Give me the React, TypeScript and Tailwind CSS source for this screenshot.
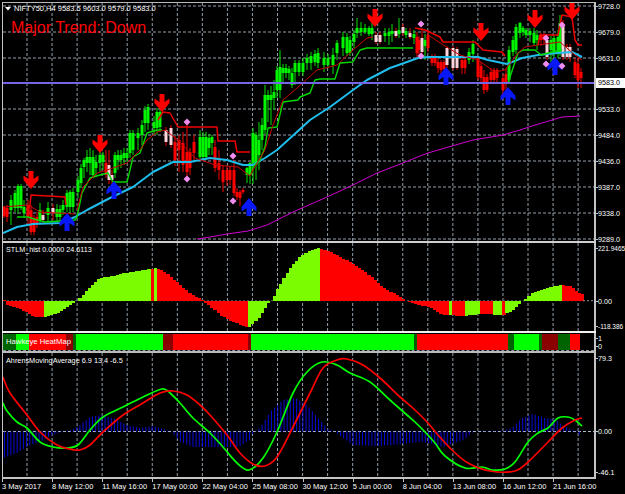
import React from "react";

type P = [number, number];
const GX = Array.from({ length: 23 }, (_, i) => 27 + i * 25.05);
const GY = [6, 32, 58, 109, 135, 161, 187, 213, 239];

const pts = (a: P[]) => a.map((p) => p.join(",")).join(" ");
const interp = (a: P[], x: number) => {
  for (let i = 1; i < a.length; i++) {
    if (x <= a[i][0]) {
      const [x0, y0] = a[i - 1];
      const [x1, y1] = a[i];
      return y0 + ((y1 - y0) * (x - x0)) / (x1 - x0 || 1);
    }
  }
  return a[a.length - 1][1];
};
const smooth = (a: P[]) => {
  let d = `M${a[0][0]},${a[0][1]}`;
  for (let i = 0; i < a.length - 1; i++) {
    const p0 = a[Math.max(i - 1, 0)];
    const p1 = a[i];
    const p2 = a[i + 1];
    const p3 = a[Math.min(i + 2, a.length - 1)];
    const c1x = p1[0] + (p2[0] - p0[0]) / 6;
    const c1y = p1[1] + (p2[1] - p0[1]) / 6;
    const c2x = p2[0] - (p3[0] - p1[0]) / 6;
    const c2y = p2[1] - (p3[1] - p1[1]) / 6;
    d += ` C${c1x},${c1y} ${c2x},${c2y} ${p2[0]},${p2[1]}`;
  }
  return d;
};

// x, wickTop, top, bottom, wickBottom, kind
type C = [number, number, number, number, number, "g" | "r" | "p"];
const candles: C[] = [
  [4, 206, 207, 216, 218, "r"], [7, 205, 208, 217, 222, "r"], [11, 195, 200, 210, 225, "g"], [15, 190, 193, 208, 212, "g"],
  [18, 184, 186, 208, 214, "g"], [21, 184, 186, 208, 210, "g"], [24, 200, 207, 213, 218, "g"], [28, 200, 205, 217, 224, "r"],
  [31, 205, 210, 232, 235, "r"], [34, 215, 218, 232, 235, "r"], [37, 212, 217, 223, 228, "r"], [40, 203, 210, 220, 224, "g"],
  [43, 210, 215, 220, 224, "p"], [48, 202, 208, 215, 222, "g"], [53, 204, 208, 213, 220, "p"], [57, 204, 209, 217, 222, "g"],
  [60, 205, 209, 217, 221, "g"], [63, 200, 205, 210, 215, "g"], [67, 190, 193, 207, 212, "g"], [70, 190, 192, 207, 214, "g"],
  [73, 188, 192, 207, 212, "g"], [78, 176, 180, 192, 198, "g"], [81, 164, 168, 183, 188, "g"], [84, 158, 160, 167, 178, "g"],
  [87, 150, 157, 163, 172, "g"], [90, 148, 157, 163, 175, "g"], [93, 150, 157, 175, 178, "g"], [96, 155, 162, 168, 176, "g"],
  [100, 150, 155, 163, 172, "g"], [103, 152, 155, 162, 170, "g"], [106, 150, 163, 175, 178, "r"], [109, 150, 165, 180, 184, "p"],
  [112, 170, 175, 180, 185, "p"], [115, 152, 155, 173, 178, "g"], [118, 150, 155, 160, 170, "g"], [121, 150, 155, 160, 168, "g"],
  [124, 148, 153, 158, 165, "g"], [127, 148, 153, 158, 162, "g"], [130, 130, 133, 153, 158, "g"], [133, 130, 133, 150, 155, "g"],
  [138, 128, 133, 138, 150, "g"], [142, 120, 125, 135, 145, "g"], [145, 106, 110, 123, 132, "g"], [148, 104, 107, 123, 130, "g"],
  [154, 116, 122, 128, 135, "g"], [157, 108, 112, 128, 135, "g"], [160, 108, 112, 127, 132, "g"], [166, 127, 130, 142, 146, "p"],
  [171, 125, 128, 145, 148, "p"], [175, 136, 142, 160, 166, "r"], [179, 135, 140, 150, 172, "r"], [183, 132, 143, 165, 172, "r"],
  [187, 124, 152, 172, 177, "r"], [190, 148, 152, 168, 175, "r"], [194, 135, 142, 153, 160, "r"], [200, 130, 137, 157, 160, "g"],
  [203, 132, 137, 157, 160, "g"], [206, 132, 137, 157, 160, "g"], [209, 134, 138, 148, 155, "g"], [212, 135, 137, 143, 155, "g"],
  [215, 140, 147, 168, 172, "r"], [219, 150, 163, 170, 180, "r"], [223, 165, 170, 182, 192, "r"], [227, 166, 170, 180, 186, "r"],
  [230, 166, 170, 180, 185, "r"], [234, 160, 170, 193, 196, "r"], [237, 188, 192, 197, 200, "r"], [240, 190, 192, 198, 206, "r"],
  [243, 188, 190, 192, 194, "r"], [247, 167, 168, 175, 183, "g"], [250, 162, 163, 175, 184, "g"], [253, 128, 133, 163, 184, "g"],
  [256, 132, 135, 165, 180, "g"], [259, 122, 140, 155, 170, "g"], [262, 118, 125, 140, 150, "g"], [265, 85, 95, 130, 134, "g"],
  [268, 90, 95, 100, 122, "g"], [271, 86, 95, 100, 125, "g"], [274, 80, 92, 98, 110, "g"], [277, 66, 70, 90, 98, "g"],
  [280, 50, 67, 90, 98, "g"], [283, 64, 68, 73, 82, "g"], [286, 64, 68, 73, 78, "g"], [289, 66, 69, 73, 80, "g"],
  [292, 68, 73, 85, 88, "g"], [295, 60, 63, 72, 85, "g"], [299, 60, 63, 72, 76, "g"], [303, 58, 63, 72, 76, "g"],
  [307, 54, 58, 63, 70, "g"], [311, 52, 56, 63, 70, "g"], [315, 50, 54, 62, 66, "g"], [318, 48, 53, 63, 68, "g"],
  [324, 52, 58, 65, 72, "g"], [328, 54, 58, 65, 68, "g"], [333, 48, 55, 65, 74, "g"], [337, 40, 43, 53, 60, "g"],
  [343, 32, 37, 48, 56, "g"], [347, 33, 37, 53, 56, "g"], [350, 36, 40, 53, 56, "g"], [354, 30, 34, 42, 48, "g"],
  [357, 18, 28, 33, 38, "g"], [361, 22, 28, 32, 36, "g"], [365, 24, 28, 32, 34, "g"], [369, 26, 28, 34, 36, "g"],
  [372, 20, 28, 34, 40, "g"], [376, 32, 35, 42, 44, "p"], [380, 32, 35, 42, 44, "p"], [385, 28, 33, 36, 42, "g"],
  [389, 28, 32, 36, 45, "g"], [392, 24, 31, 34, 42, "g"], [396, 28, 31, 36, 38, "p"], [399, 18, 30, 34, 38, "g"],
  [403, 24, 27, 33, 36, "p"], [406, 28, 31, 35, 38, "g"], [410, 28, 33, 37, 39, "p"], [414, 30, 34, 38, 44, "g"],
  [417, 32, 37, 53, 58, "r"], [419, 36, 40, 50, 56, "r"], [422, 28, 38, 52, 56, "p"], [425, 34, 40, 46, 60, "g"],
  [428, 30, 35, 48, 52, "r"], [432, 54, 57, 63, 66, "r"], [435, 54, 57, 63, 66, "r"], [438, 58, 62, 68, 73, "r"],
  [441, 60, 62, 70, 74, "r"], [444, 60, 62, 69, 72, "r"], [447, 46, 48, 65, 68, "p"], [453, 46, 48, 68, 70, "p"],
  [457, 47, 49, 68, 70, "p"], [462, 56, 60, 68, 74, "r"], [465, 56, 60, 68, 74, "r"], [469, 48, 52, 60, 64, "g"],
  [473, 40, 44, 54, 62, "g"], [478, 56, 58, 77, 80, "r"], [481, 62, 66, 78, 82, "r"], [484, 70, 77, 90, 94, "r"],
  [487, 74, 77, 90, 92, "r"], [491, 68, 72, 80, 84, "r"], [494, 68, 70, 80, 82, "r"], [497, 68, 70, 78, 82, "r"],
  [503, 74, 78, 90, 96, "r"], [506, 68, 74, 84, 92, "r"], [509, 46, 50, 80, 84, "g"], [513, 36, 40, 52, 56, "g"],
  [516, 24, 27, 50, 54, "g"], [520, 22, 23, 33, 38, "g"], [523, 26, 28, 32, 36, "g"], [526, 28, 30, 35, 38, "g"],
  [530, 28, 31, 35, 42, "g"], [534, 28, 33, 43, 46, "g"], [537, 30, 35, 40, 50, "g"], [541, 33, 35, 40, 46, "r"],
  [544, 33, 35, 40, 44, "r"], [547, 38, 40, 57, 60, "p"], [551, 36, 40, 50, 62, "g"], [554, 36, 38, 53, 60, "g"],
  [558, 30, 37, 53, 58, "g"], [560, 15, 23, 52, 56, "g"], [563, 20, 25, 57, 60, "p"], [567, 44, 47, 57, 60, "p"],
  [570, 44, 47, 57, 62, "p"], [575, 58, 62, 75, 78, "r"], [578, 58, 64, 80, 88, "r"], [581, 68, 72, 78, 88, "r"],
];

const cyan: P[] = [[3, 233], [17, 227], [33, 224], [60, 223], [75, 217], [87, 210], [110, 198], [133, 187], [153, 172], [173, 162], [190, 162], [210, 158], [227, 160], [243, 165], [253, 165], [265, 158], [277, 150], [298, 131], [310, 120], [330, 107], [353, 90], [367, 80], [390, 68], [407, 62], [418, 58], [428, 57], [478, 57], [488, 60], [507, 64], [522, 58], [538, 55], [558, 53], [572, 52], [582, 57]];
const magenta: P[] = [[197, 239], [210, 237], [227, 234], [248, 231], [267, 225], [293, 212], [327, 197], [353, 185], [377, 173], [403, 163], [420, 156], [428, 153], [445, 148], [452, 146], [473, 140], [503, 135], [520, 130], [532, 126], [562, 117], [580, 116]];
const greenA: P[] = [[17, 217], [28, 217], [34, 219], [45, 222], [75, 220], [77, 217], [82, 193], [90, 178], [100, 175], [108, 173], [113, 182], [127, 182], [130, 170], [133, 157], [140, 153], [147, 133], [157, 130], [162, 130]];
const greenB: P[] = [[252, 168], [260, 160], [265, 147], [268, 128], [277, 127], [283, 102], [298, 100], [300, 97], [310, 93], [315, 80], [320, 79], [335, 79], [340, 63], [353, 62], [360, 50], [367, 48], [413, 48]];
const greenC: P[] = [[508, 83], [518, 53], [523, 50], [535, 50], [541, 55], [552, 52], [562, 50]];
const redBold: P[][] = [
  [[28, 210], [30, 205], [31, 195], [48, 196], [65, 197], [66, 205]],
  [[158, 120], [163, 112], [170, 113], [178, 127], [217, 127], [218, 141], [235, 141], [237, 152], [250, 152]],
  [[415, 28], [425, 30], [440, 37], [443, 42], [475, 42], [483, 50], [502, 52], [505, 56]],
  [[538, 45], [540, 35], [558, 35], [562, 15], [572, 17], [575, 40], [578, 45], [582, 45]],
];
const redThin: P[][] = [
  [[3, 207], [28, 205], [40, 212], [75, 214]],
  [[77, 210], [83, 187], [97, 173], [107, 170], [127, 163], [140, 150], [147, 140], [157, 132], [165, 130], [178, 140], [195, 158], [215, 165], [238, 167], [250, 176], [253, 170], [265, 150], [273, 125], [283, 100], [297, 88], [317, 70], [337, 65], [353, 50], [367, 38], [373, 37]],
  [[428, 35], [445, 46], [460, 55], [478, 60], [495, 72], [505, 70], [518, 53], [525, 47], [538, 45], [560, 42], [575, 55], [582, 60]],
];
const down = (c: number, y: number) => `translate(${c} ${y})`;
const arrowPts = "-2.5,0 2.5,0 2.5,8 7.5,4.5 7.5,9 0,18 -7.5,9 -7.5,4.5 -2.5,8";
const reds: P[] = [[31, 171], [100, 135], [162, 94], [375, 9], [481, 23], [535, 10], [572, 2]];
const blues: P[] = [[67, 213], [114, 181], [249, 198], [446, 67], [508, 87], [555, 57]];
const diamonds: P[] = [[187, 122], [187, 179], [233, 156], [233, 201], [421, 24], [421, 56], [546, 38], [546, 64], [562, 25], [562, 66]];

const stlm: P[] = [[3, 297], [5, 301], [7, 305], [17, 308], [27, 312], [35, 317], [45, 317], [53, 315], [63, 310], [77, 301], [80, 298], [90, 287], [100, 278], [113, 276], [130, 272], [150, 269], [157, 268], [167, 273], [180, 285], [193, 295], [202, 300], [210, 306], [220, 315], [233, 322], [247, 327], [250, 327], [260, 317], [268, 303], [273, 300], [277, 290], [283, 280], [290, 268], [300, 257], [310, 250], [320, 248], [333, 253], [350, 262], [367, 273], [383, 287], [407, 301], [415, 304], [432, 308], [442, 315], [448, 315], [465, 316], [480, 314], [504, 315], [513, 310], [523, 301], [532, 293], [540, 291], [550, 287], [561, 285], [570, 286], [578, 292], [582, 294]];
const stlmGreen: P[] = [[44, 151], [154, 157], [248, 320], [448, 451], [464, 480], [492, 502], [504, 561]];
const ahrensHist: P[] = [[3, 458], [17, 453], [30, 445], [40, 442], [50, 436], [63, 431.5], [72, 430], [80, 425], [90, 417], [100, 415], [113, 418], [127, 425], [140, 428], [153, 426], [163, 429], [172, 432], [180, 442], [193, 447], [210, 447], [227, 447], [238, 447], [250, 440], [253, 433], [260, 428], [270, 412], [283, 400], [295, 398], [307, 405], [320, 420], [328, 429], [333, 431], [343, 438], [353, 445], [377, 446], [393, 445], [420, 442], [428, 443], [443, 447], [455, 443], [465, 439], [473, 432], [480, 431], [502, 431], [512, 428], [522, 418], [533, 414], [545, 418], [555, 419], [562, 425], [572, 430], [577, 431], [581, 438]];
const ahrensGreen: P[] = [[3, 403], [7, 411], [17, 422], [27, 428], [40, 442], [53, 447], [67, 448], [78, 445], [90, 430], [103, 417], [123, 407], [143, 397], [162, 389], [170, 393], [180, 403], [193, 418], [210, 433], [223, 447], [237, 463], [249, 470], [263, 458], [277, 432], [293, 393], [307, 372], [322, 362], [337, 365], [350, 373], [370, 382], [390, 400], [407, 415], [415, 422], [425, 432], [435, 443], [445, 456], [465, 468], [482, 467], [492, 470], [505, 469], [515, 462], [528, 442], [538, 433], [548, 428], [558, 418], [568, 417], [575, 420], [582, 426]];
const ahrensRed: P[] = [[3, 377], [10, 393], [27, 415], [40, 432], [57, 445], [70, 449], [80, 450], [90, 445], [103, 432], [123, 415], [143, 403], [160, 393], [173, 391], [187, 395], [200, 405], [210, 415], [227, 435], [240, 453], [253, 464], [265, 466], [277, 457], [293, 427], [310, 393], [323, 368], [337, 360], [347, 359], [363, 365], [380, 378], [400, 397], [415, 410], [428, 423], [438, 435], [452, 450], [468, 463], [490, 471], [515, 471], [528, 462], [548, 442], [562, 428], [575, 420], [582, 418]];

const heat: [number, number, string][] = [
  [3, 16, "#006400"], [16, 29, "#00ff00"], [29, 66, "#ff0000"], [66, 73, "#8b0000"], [73, 76, "#006400"], [76, 163, "#00ff00"],
  [163, 173, "#8b0000"], [173, 248, "#ff0000"], [248, 251, "#8b0000"], [251, 414, "#00ff00"], [414, 417, "#006400"], [417, 508, "#ff0000"],
  [508, 514, "#006400"], [514, 539, "#00ff00"], [539, 542, "#006400"], [542, 558, "#8b0000"], [558, 570, "#006400"], [570, 580, "#ff0000"],
];

const barXs = Array.from({ length: 185 }, (_, i) => 3 + i * 3.14);
const VGrid = ({ top, bottom }: { top: number; bottom: number }) => (
  <g stroke="#94a0ac" strokeDasharray="3 2" strokeWidth="1">
    {GX.map((x) => (
      <line key={x} x1={x} x2={x} y1={top} y2={bottom} />
    ))}
  </g>
);
const Line = ({ p, c, w }: { p: P[]; c: string; w: number }) => (
  <polyline points={pts(p)} fill="none" stroke={c} strokeWidth={w} strokeLinejoin="round" />
);

const priceLabels: [string, number][] = [["9728.0", 6], ["9679.0", 32], ["9631.0", 58], ["9533.0", 109], ["9484.0", 135], ["9436.0", 161], ["9387.0", 187], ["9338.0", 213], ["9289.0", 239], ["221.9465", 248], ["0.00", 301], ["-118.386", 326], ["1", 338], ["0", 346], ["79.3", 358], ["0.00", 431], ["-46.1", 472]];
const times = ["3 May 2017", "8 May 12:00", "11 May 16:00", "17 May 00:00", "22 May 04:00", "25 May 08:00", "30 May 12:00", "5 Jun 00:00", "8 Jun 04:00", "13 Jun 08:00", "16 Jun 12:00", "21 Jun 16:00"];

const paneCls = "relative border-l border-r-2 border-[#c4c4c4]";

export default function App() {
  return (
    <div className="relative h-[494px] w-[625px] overflow-hidden bg-black pt-[2px] pl-[2px] font-['Liberation_Sans',sans-serif] text-[7.5px] leading-[9px] text-white">
      <div className="flex">
        <div className="flex w-[594px] flex-col">
          <div className="h-px bg-[#b8b8b8]" />
          {/* main chart */}
          <div className={`${paneCls} h-[238px]`}>
            <svg className="block h-full w-full" viewBox="3 3 591 238">
              <VGrid top={3} bottom={241} />
              <g stroke="#94a0ac" strokeDasharray="3 2">
                {GY.map((y) => (
                  <line key={y} x1={3} x2={594} y1={y} y2={y} />
                ))}
              </g>
              {candles.map(([x, wt, t, b, wb, k], i) => {
                const col = k === "g" ? "#00f500" : k === "r" ? "#ff0000" : "#ffd4dc";
                const wick = k === "g" ? "#00e000" : "#f00000";
                return (
                  <g key={i}>
                    <line x1={x} x2={x} y1={wt} y2={wb} stroke={wick} strokeWidth="1" />
                    <rect x={x - 1.5} y={t} width={3} height={b - t} fill={col} />
                  </g>
                );
              })}
              <Line p={magenta} c="#d000d0" w={1} />
              <Line p={cyan} c="#1fbdec" w={2} />
              <Line p={greenA} c="#00d800" w={1.4} />
              <Line p={greenB} c="#00d800" w={1.4} />
              <Line p={greenC} c="#00d800" w={1.4} />
              {redThin.map((p, i) => (
                <Line key={i} p={p} c="#c80000" w={1} />
              ))}
              {redBold.map((p, i) => (
                <Line key={i} p={p} c="#f00000" w={1.5} />
              ))}
              <line x1={3} x2={594} y1={83} y2={83} stroke="#7466e4" strokeWidth="2" />
              {reds.map(([x, y]) => (
                <polygon key={x} points={arrowPts} fill="#ff0000" transform={down(x, y)} />
              ))}
              {blues.map(([x, y]) => (
                <polygon key={x} points={arrowPts} fill="#0818f8" transform={`translate(${x} ${y + 18}) scale(1 -1)`} />
              ))}
              {diamonds.map(([x, y], i) => (
                <polygon key={i} points={`${x},${y - 3.5} ${x + 3.5},${y} ${x},${y + 3.5} ${x - 3.5},${y}`} fill="#f08cf0" />
              ))}
              <polygon points="5,7 11,7 8,10.5" fill="#ffffff" />
            </svg>
            <div className="absolute top-[1px] left-[11px] whitespace-nowrap">NIFTY50,H4 9583.5 9603.0 9579.0 9583.0</div>
            <div className="absolute top-[15px] left-[8px] text-[16px] leading-[20px] whitespace-nowrap text-[#ff0000]">Major Trend: Down</div>
          </div>
          <div className="h-[2px] bg-[#d0d0d0]" />
          {/* STLM */}
          <div className={`${paneCls} h-[88px]`}>
            <svg className="block h-full w-full" viewBox="3 243 591 88">
              <VGrid top={243} bottom={331} />
              <line x1={3} x2={582} y1={300.7} y2={300.7} stroke="#555f68" strokeDasharray="2 2" />
              {barXs.map((x) => {
                const mid = x + 1.57;
                if (mid > 583) return null;
                const y = Math.round(interp(stlm, mid));
                const up = y < 300.7;
                const isGreen = stlmGreen.some(([a, b]) => mid >= a && mid < b);
                return (
                  <rect key={x} x={x} width={3.3} y={up ? y : 300.7} height={Math.abs(y - 300.7)} fill={isGreen ? "#7cfc00" : "#ff0000"} shapeRendering="crispEdges" />
                );
              })}
              <line x1={583} x2={594} y1={300.7} y2={300.7} stroke="#8a949e" strokeDasharray="2 2" />
            </svg>
            <div className="absolute top-[2px] left-[3px] text-[7.2px] whitespace-nowrap">STLM_hist 0.0000 24.6113</div>
          </div>
          <div className="h-[2px] bg-[#f0f0f0]" />
          {/* Heat map */}
          <div className={`${paneCls} h-[18px]`}>
            <div className="flex h-[17px] items-stretch pt-px">
              {heat.map(([a, b, c]) => (
                <div key={a} className="h-full" style={{ width: b - a, background: c }} />
              ))}
            </div>
            <div className="h-px w-full border-t border-dashed border-[#8a949e]" />
            <div className="absolute top-[4px] left-[3px] text-[7.7px] whitespace-nowrap">Hawkeye HeatMap</div>
          </div>
          <div className="h-[2px] bg-[#bcbcbc]" />
          {/* Ahrens */}
          <div className={`${paneCls} h-[124px]`}>
            <svg className="block h-full w-full" viewBox="3 353 591 124">
              <VGrid top={353} bottom={477} />
              <line x1={3} x2={594} y1={431.5} y2={431.5} stroke="#b0bac4" strokeDasharray="3 2" />
              {barXs.map((x) => {
                const mid = x + 1.57;
                if (mid > 582) return null;
                return <line key={x} x1={mid} x2={mid} y1={431.5} y2={interp(ahrensHist, mid)} stroke="#0808d8" strokeWidth="1" />;
              })}
              <path d={smooth(ahrensGreen)} fill="none" stroke="#00ff00" strokeWidth="1.7" />
              <path d={smooth(ahrensRed)} fill="none" stroke="#ff0000" strokeWidth="1.7" />
            </svg>
            <div className="absolute top-[3px] left-[3px] text-[7.3px] whitespace-nowrap">AhrensMovingAverage 6.9 13.4 -6.5</div>
          </div>
          <div className="h-[2px] bg-[#c4c4c4]" />
        </div>
        {/* price axis */}
        <div className="relative w-[29px]">
          {priceLabels.map(([t, y]) => (
            <React.Fragment key={t + y}>
              <div className="absolute left-0 h-px w-[2px] bg-[#c4c4c4]" style={{ top: y - 2 }} />
              <div className={`absolute left-[2px] whitespace-nowrap ${t.length > 6 ? "text-[6.5px]" : "text-[7.2px]"}`} style={{ top: y - 6.5 }}>
                {t}
              </div>
            </React.Fragment>
          ))}
          <div className="absolute top-[76px] left-0 h-[10px] w-[29px] bg-white pl-[2px] text-[7.2px] text-black">9583.0</div>
        </div>
      </div>
      {/* time axis */}
      <div className="flex">
        {times.map((t) => (
          <div key={t} className="w-[50.1px] shrink-0">
            <div className="h-[3px] w-px bg-[#c4c4c4]" />
            <div className="whitespace-nowrap">{t}</div>
          </div>
        ))}
      </div>
    </div>
  );
}
